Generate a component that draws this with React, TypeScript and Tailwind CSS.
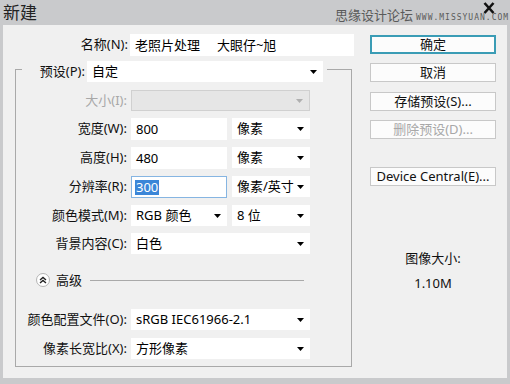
import React from "react";

const FONT = "font-['Noto_Sans','Noto_Sans_CJK_SC',sans-serif]";

function Arrow({ color = "#000" }: { color?: string }) {
  return (
    <svg width="7" height="4" viewBox="0 0 7 4" className="shrink-0">
      <path d="M0 0H7L3.5 4Z" fill={color} />
    </svg>
  );
}

function Select({ w, text, disabled }: { w: string; text?: string; disabled?: boolean }) {
  return (
    <div
      className={`${w} h-[21px] flex items-center justify-between gap-[3px] pl-[5px] pr-[6px] ${
        disabled ? "bg-[#e6e6e6] border border-[#d0d0d0]" : "bg-white"
      }`}
    >
      <span className="leading-none whitespace-nowrap">{text}</span>
      <Arrow color={disabled ? "#b0b0b0" : "#000"} />
    </div>
  );
}

function Input({ w, text }: { w: string; text: string }) {
  return (
    <div className={`${w} h-[22px] flex items-center pl-[5px] bg-white`}>
      <span className="leading-none">{text}</span>
    </div>
  );
}

function Row({ label, children, mt, disabled }: { label: string; children: React.ReactNode; mt: string; disabled?: boolean }) {
  return (
    <div className={`flex items-center ${mt}`}>
      <div className={`w-[111px] text-right ${disabled ? "text-[#a8a8a8]" : "text-[#111]"}`}>{label}</div>
      <div className="ml-[4px] flex gap-[5px]">{children}</div>
    </div>
  );
}

function Btn({ text, mt, primary, disabled }: { text: string; mt: string; primary?: boolean; disabled?: boolean }) {
  return (
    <div
      className={`${mt} w-[126px] h-[19px] flex items-center justify-center bg-[#fcfcfc] ${
        primary ? "border-2 border-[#3a9cb5]" : "border border-[#c8c8c8]"
      } ${disabled ? "text-[#a8a8a8]" : "text-[#111]"}`}
    >
      <span className="leading-none">{text}</span>
    </div>
  );
}

export default function App() {
  return (
    <div className={`w-[510px] h-[384px] bg-[#c9cacc] flex flex-col text-[13px] ${FONT}`}>
      {/* title bar */}
      <div className="h-[25px] relative shrink-0">
        <div className="pl-[3px] pt-[2px] text-[17px] text-[#222] leading-[22px]">新建</div>
        <div className="absolute left-[335px] top-[8px] flex items-end text-[#5a5a5a]">
          <span className="text-[13px] leading-[14px]">思缘设计论坛</span>
          <span className="ml-[3px] mb-[1px] text-[8px] leading-[7px] tracking-[1px] font-['DejaVu_Sans_Mono',monospace]">
            WWW.MISSYUAN.COM
          </span>
        </div>
        <svg className="absolute left-[483px] top-[2px]" width="12" height="12" viewBox="0 0 12 12">
          <path d="M1.5 1L10.5 11M10.5 1L1.5 11" stroke="#111" strokeWidth="2.6" />
        </svg>
      </div>

      {/* body */}
      <div className="ml-[3px] w-[504px] h-[353px] bg-[#f0f0f0] flex">
        {/* left */}
        <div className="w-[357px] flex flex-col">
          <div className="mt-[9px] flex items-center h-[22px]">
            <div className="w-[125px] text-right text-[#111]">名称(N):</div>
            <div className="ml-[2px] w-[224px] h-[22px] bg-white flex items-center pl-[5px]">
              <span className="leading-none whitespace-pre">老照片处理     大眼仔~旭</span>
            </div>
          </div>

          <div className="mt-[13px] ml-[12px] w-[337px] h-[298px] border border-[#a9a9a9] flex flex-col">
            {/* legend */}
            <div className="-mt-[9px] ml-[6px] w-[305px] bg-[#f0f0f0] flex items-center">
              <div className="w-[63px] text-right text-[#111]">预设(P):</div>
              <div className="ml-[2px]">
                <Select w="w-[236px]" text="自定" />
              </div>
            </div>

            <Row label="大小(I):" mt="mt-[8px]" disabled>
              <Select w="w-[179px]" disabled />
            </Row>
            <Row label="宽度(W):" mt="mt-[7px]">
              <Input w="w-[96px]" text="800" />
              <Select w="w-[78px]" text="像素" />
            </Row>
            <Row label="高度(H):" mt="mt-[7px]">
              <Input w="w-[96px]" text="480" />
              <Select w="w-[78px]" text="像素" />
            </Row>
            <Row label="分辨率(R):" mt="mt-[7px]">
              <div className="w-[96px] h-[22px] flex items-center pl-[3px] bg-white border border-[#86b5e2]">
                <span className="leading-[15px] px-[1px] bg-[#3b86d8] text-white">300</span>
              </div>
              <Select w="w-[78px]" text="像素/英寸" />
            </Row>
            <Row label="颜色模式(M):" mt="mt-[7px]">
              <Select w="w-[96px]" text="RGB 颜色" />
              <Select w="w-[78px]" text="8 位" />
            </Row>
            <Row label="背景内容(C):" mt="mt-[7px]">
              <Select w="w-[179px]" text="白色" />
            </Row>

            {/* advanced */}
            <div className="mt-[19px] h-[14px] flex items-center">
              <div className="ml-[20px] w-[14px] h-[14px] rounded-full border border-[#b4b4b4] bg-white flex items-center justify-center">
                <svg width="8" height="8" viewBox="0 0 8 8">
                  <path d="M1 4L4 1.5L7 4M1 7L4 4.5L7 7" stroke="#222" strokeWidth="1.4" fill="none" />
                </svg>
              </div>
              <span className="ml-[6px] text-[#111] leading-none">高级</span>
              <div className="ml-[8px] w-[214px] h-px bg-[#a9a9a9]" />
            </div>

            <Row label="颜色配置文件(O):" mt="mt-[22px]">
              <Select w="w-[179px]" text="sRGB IEC61966-2.1" />
            </Row>
            <Row label="像素长宽比(X):" mt="mt-[8px]">
              <Select w="w-[179px]" text="方形像素" />
            </Row>
          </div>
        </div>

        {/* right */}
        <div className="ml-[10px] flex flex-col">
          <Btn text="确定" mt="mt-[10px]" primary />
          <Btn text="取消" mt="mt-[9px]" />
          <Btn text="存储预设(S)..." mt="mt-[10px]" />
          <Btn text="删除预设(D)..." mt="mt-[9px]" disabled />
          <Btn text="Device Central(E)..." mt="mt-[28px]" />
          <div className="mt-[63px] w-[126px] text-center text-[#111] leading-[18px]">图像大小:</div>
          <div className="mt-[7px] w-[126px] text-center text-[#111] leading-[18px]">1.10M</div>
        </div>
      </div>
    </div>
  );
}
